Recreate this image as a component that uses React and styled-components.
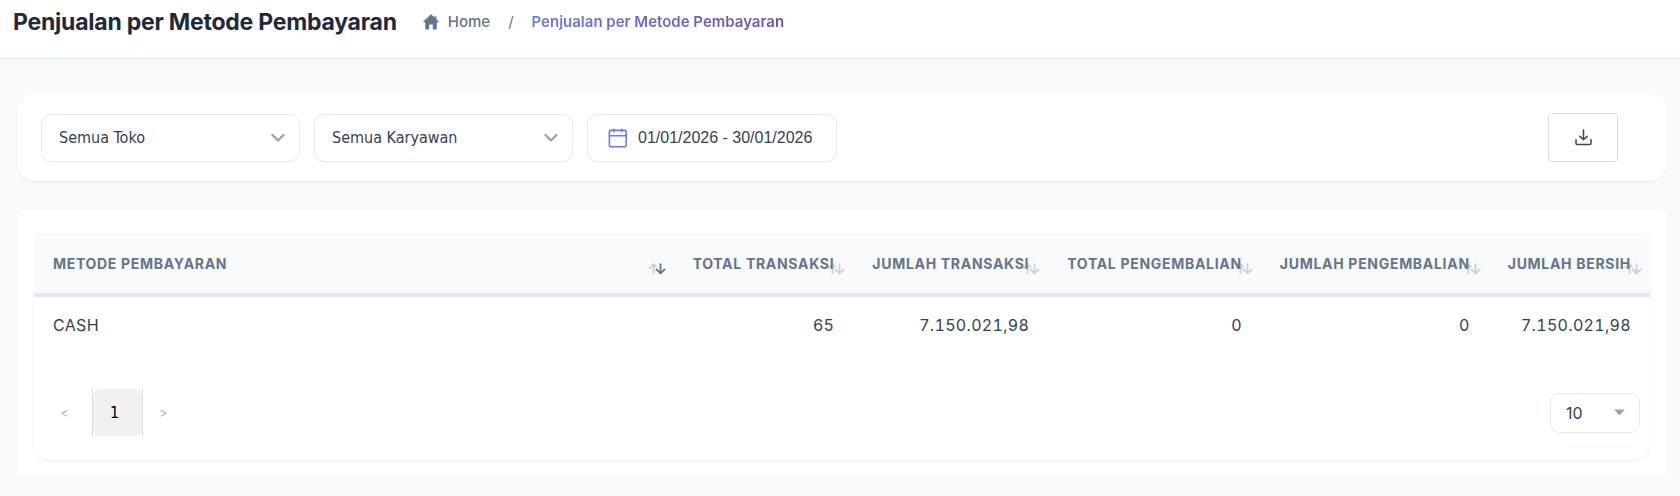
import React from 'react';
import styled, { createGlobalStyle, css } from 'styled-components';

const GlobalStyle = createGlobalStyle`
  * {
    box-sizing: border-box;
  }
  body {
    margin: 0;
    background: #f8fafc;
    color: #334155;
    font-family: Inter, "Liberation Sans", sans-serif;
    font-size: 16px;
  }
  button, select {
    font: inherit;
    color: inherit;
  }
`;

const Header = styled.header`
  display: flex;
  align-items: center;
  gap: 26px;
  padding: 0 13px 14px;
  background: #fff;
  border-bottom: 1px solid #e2e8f0;
`;

const Title = styled.h1`
  margin: 0;
  color: #1e293b;
  font-size: 23px;
  line-height: 44px;
  font-weight: 700;
  letter-spacing: -0.01em;
`;

const Breadcrumb = styled.nav`
  display: flex;
  align-items: center;
  color: #64748b;
  font-size: 15px;
  line-height: 44px;
`;

const HomeLink = styled.a`
  display: flex;
  align-items: center;
  gap: 9px;
  color: inherit;
  font-weight: 500;
  text-decoration: none;
`;

const Slash = styled.span`
  padding: 0 18px;
`;

const Current = styled.span`
  font-weight: 600;
  background: linear-gradient(135deg, #667eea 0%, #764ba2 100%);
  background-clip: text;
  color: transparent;
`;

const Main = styled.main`
  display: flex;
  flex-direction: column;
  gap: 29px;
  padding: 35px 14px 20px 18px;
`;

const FilterCard = styled.section`
  display: flex;
  align-items: center;
  gap: 14px;
  padding: 19px 48px 19px 23px;
  background: #fff;
  border-radius: 16px;
  box-shadow: 0 1px 3px rgba(15, 23, 42, 0.06);
`;

const field = css`
  height: 48px;
  background: #fff;
  border: 1px solid #e2e8f0;
  border-radius: 10px;
`;

const SelectBox = styled.div`
  display: grid;
  align-items: center;
  width: ${(props) => props.$width}px;

  > * {
    grid-area: 1 / 1;
  }
  svg {
    justify-self: end;
    margin-right: 15px;
    pointer-events: none;
  }
`;

const Select = styled.select`
  ${field}
  appearance: none;
  width: 100%;
  height: ${(props) => (props.$small ? 40 : 48)}px;
  padding: 0 40px 0 ${(props) => (props.$small ? 15 : 17)}px;
  font-family: ${(props) => (props.$small ? 'Inter' : '"DejaVu Sans Condensed"')}, sans-serif;
`;

const DateButton = styled.button`
  ${field}
  display: flex;
  align-items: center;
  gap: 10px;
  min-width: 250px;
  padding: 0 20px;
  font-family: "Liberation Sans", sans-serif;
`;

const DownloadButton = styled.button`
  display: flex;
  align-items: center;
  justify-content: center;
  width: 70px;
  height: 49px;
  margin-left: auto;
  background: #fff;
  border: 1px solid #dcdcdc;
  border-radius: 4px;
`;

const TableSection = styled.section`
  padding: 16px;
  background: #fff;
  border-radius: 5px;
`;

const TableCard = styled.div`
  padding: 7px 0 24px;
  border-radius: 16px;
  box-shadow: 0 1px 3px rgba(15, 23, 42, 0.06);
`;

const Table = styled.table`
  width: 100%;
  border-collapse: separate;
  border-spacing: 0;
  font-size: 16px;
`;

const Th = styled.th`
  position: relative;
  height: 64px;
  padding: 0 19px;
  background: #f8fafc;
  border-bottom: 4px solid #e2e8f0;
  color: #64748b;
  font-size: 14px;
  font-weight: 700;
  letter-spacing: 0.05em;
  text-align: ${(props) => (props.$text ? 'left' : 'right')};
  white-space: nowrap;
`;

const Sort = styled.svg`
  position: absolute;
  right: 8px;
  bottom: 18px;
`;

const Td = styled.td`
  height: 57px;
  padding: 0 19px 2px;
  font-variant-numeric: tabular-nums;
  letter-spacing: 0.02em;
  text-align: ${(props) => (props.$text ? 'left' : 'right')};
`;

const TableFooter = styled.div`
  display: flex;
  align-items: center;
  justify-content: space-between;
  padding: 35px 10px 0;
`;

const Pagination = styled.nav`
  display: flex;
`;

const PageButton = styled.button`
  width: ${(props) => (props.$active ? 49 : 41)}px;
  height: 47px;
  padding: 0;
  background: none;
  border: 0;
  color: #b4b4b4;
  font-size: 13px;
`;

const PageFrame = styled.div`
  margin-left: 7px;
  border: solid #ddd;
  border-width: 0 1px;

  ${PageButton} {
    padding-right: 6px;
    background: #f1f1f1;
    border-radius: 7px;
    color: #000;
    font-family: "DejaVu Sans Condensed", sans-serif;
    font-size: 16px;
  }
`;

const columns = [
  { name: 'METODE PEMBAYARAN', value: 'CASH', text: true, width: '39.9%' },
  { name: 'TOTAL TRANSAKSI', value: '65', width: '11.1%' },
  { name: 'JUMLAH TRANSAKSI', value: '7.150.021,98', width: '12%' },
  { name: 'TOTAL PENGEMBALIAN', value: '0', width: '13.1%' },
  { name: 'JUMLAH PENGEMBALIAN', value: '0', width: '14%' },
  { name: 'JUMLAH BERSIH', value: '7.150.021,98', width: '9.9%' },
];

const HomeIcon = () => (
  <svg width="16" height="16" viewBox="0 0 16 16" fill="currentColor" aria-hidden="true">
    <path d="M8 0.2 0.3 7.4Q0 8.2 1 8.2H2.2V14.2Q2.2 15.4 3.4 15.4H6.2V10.6H9.8V15.4H12.6Q13.8 15.4 13.8 14.2V8.2H15Q16 8.2 15.7 7.4L13.3 5.1V2.2H11.6V3.5Z" />
  </svg>
);

const Chevron = () => (
  <svg width="14" height="10" viewBox="0 0 14 10" fill="none" stroke="#9ca3af" strokeWidth="2.4" strokeLinecap="round" strokeLinejoin="round" aria-hidden="true">
    <path d="M1.5 2 7 7.5 12.5 2" />
  </svg>
);

const Caret = () => (
  <svg width="11" height="7" viewBox="0 0 11 7" fill="#9ca3af" aria-hidden="true">
    <path d="M0 0.5H11L5.5 6.5Z" />
  </svg>
);

const CalendarIcon = () => (
  <svg width="20" height="20" viewBox="0 0 20 20" fill="none" stroke="#667eea" strokeWidth="1.6" strokeLinecap="round" aria-hidden="true">
    <rect x="1.4" y="2.4" width="16.8" height="16.4" rx="1.6" />
    <path d="M1.4 7.8H18.2M6 1.2V3.6M13.6 1.2V3.6" />
  </svg>
);

const DownloadIcon = () => (
  <svg width="17" height="17" viewBox="0 0 17 17" fill="none" stroke="#444" strokeWidth="1.5" strokeLinecap="round" strokeLinejoin="round" aria-hidden="true">
    <path d="M8.5 1V10.5M4.8 7.2 8.5 10.8 12.2 7.2M1 10.8V14.3Q1 15.6 2.3 15.6H14.7Q16 15.6 16 14.3V10.8" />
  </svg>
);

const SortIcon = ({ active }) => (
  <Sort width="18" height="12" viewBox="0 0 18 12" fill="none" stroke="#64748b" strokeWidth="1.8" aria-hidden="true">
    <path opacity="0.3" d="M5.5 11V1.5M1 5.5 5.5 1.3 8.5 4.2" />
    <path opacity={active ? 1 : 0.3} d="M12.5 0.5V10M8 6 12.5 10.3 17 6" />
  </Sort>
);

const FilterSelect = ({ label, option }) => (
  <SelectBox $width={259}>
    <Select aria-label={label}>
      <option>{option}</option>
    </Select>
    <Chevron />
  </SelectBox>
);

const App = () => {
  return (
    <>
      <GlobalStyle />
      <Header>
        <Title>Penjualan per Metode Pembayaran</Title>
        <Breadcrumb>
          <HomeLink href="#">
            <HomeIcon />
            Home
          </HomeLink>
          <Slash>/</Slash>
          <Current>Penjualan per Metode Pembayaran</Current>
        </Breadcrumb>
      </Header>
      <Main>
        <FilterCard>
          <FilterSelect label="Toko" option="Semua Toko" />
          <FilterSelect label="Karyawan" option="Semua Karyawan" />
          <DateButton>
            <CalendarIcon />
            01/01/2026 - 30/01/2026
          </DateButton>
          <DownloadButton aria-label="Unduh">
            <DownloadIcon />
          </DownloadButton>
        </FilterCard>
        <TableSection>
          <TableCard>
            <Table>
              <thead>
                <tr>
                  {columns.map((column) => (
                    <Th key={column.name} $text={column.text} width={column.width}>
                      {column.name}
                      <SortIcon active={column.text} />
                    </Th>
                  ))}
                </tr>
              </thead>
              <tbody>
                <tr>
                  {columns.map((column) => (
                    <Td key={column.name} $text={column.text}>{column.value}</Td>
                  ))}
                </tr>
              </tbody>
            </Table>
            <TableFooter>
              <Pagination>
                <PageButton disabled>&lt;</PageButton>
                <PageFrame>
                  <PageButton $active>1</PageButton>
                </PageFrame>
                <PageButton disabled>&gt;</PageButton>
              </Pagination>
              <SelectBox $width={90}>
                <Select aria-label="Baris per halaman" $small>
                  <option>10</option>
                </Select>
                <Caret />
              </SelectBox>
            </TableFooter>
          </TableCard>
        </TableSection>
      </Main>
    </>
  );
};

export default App;
